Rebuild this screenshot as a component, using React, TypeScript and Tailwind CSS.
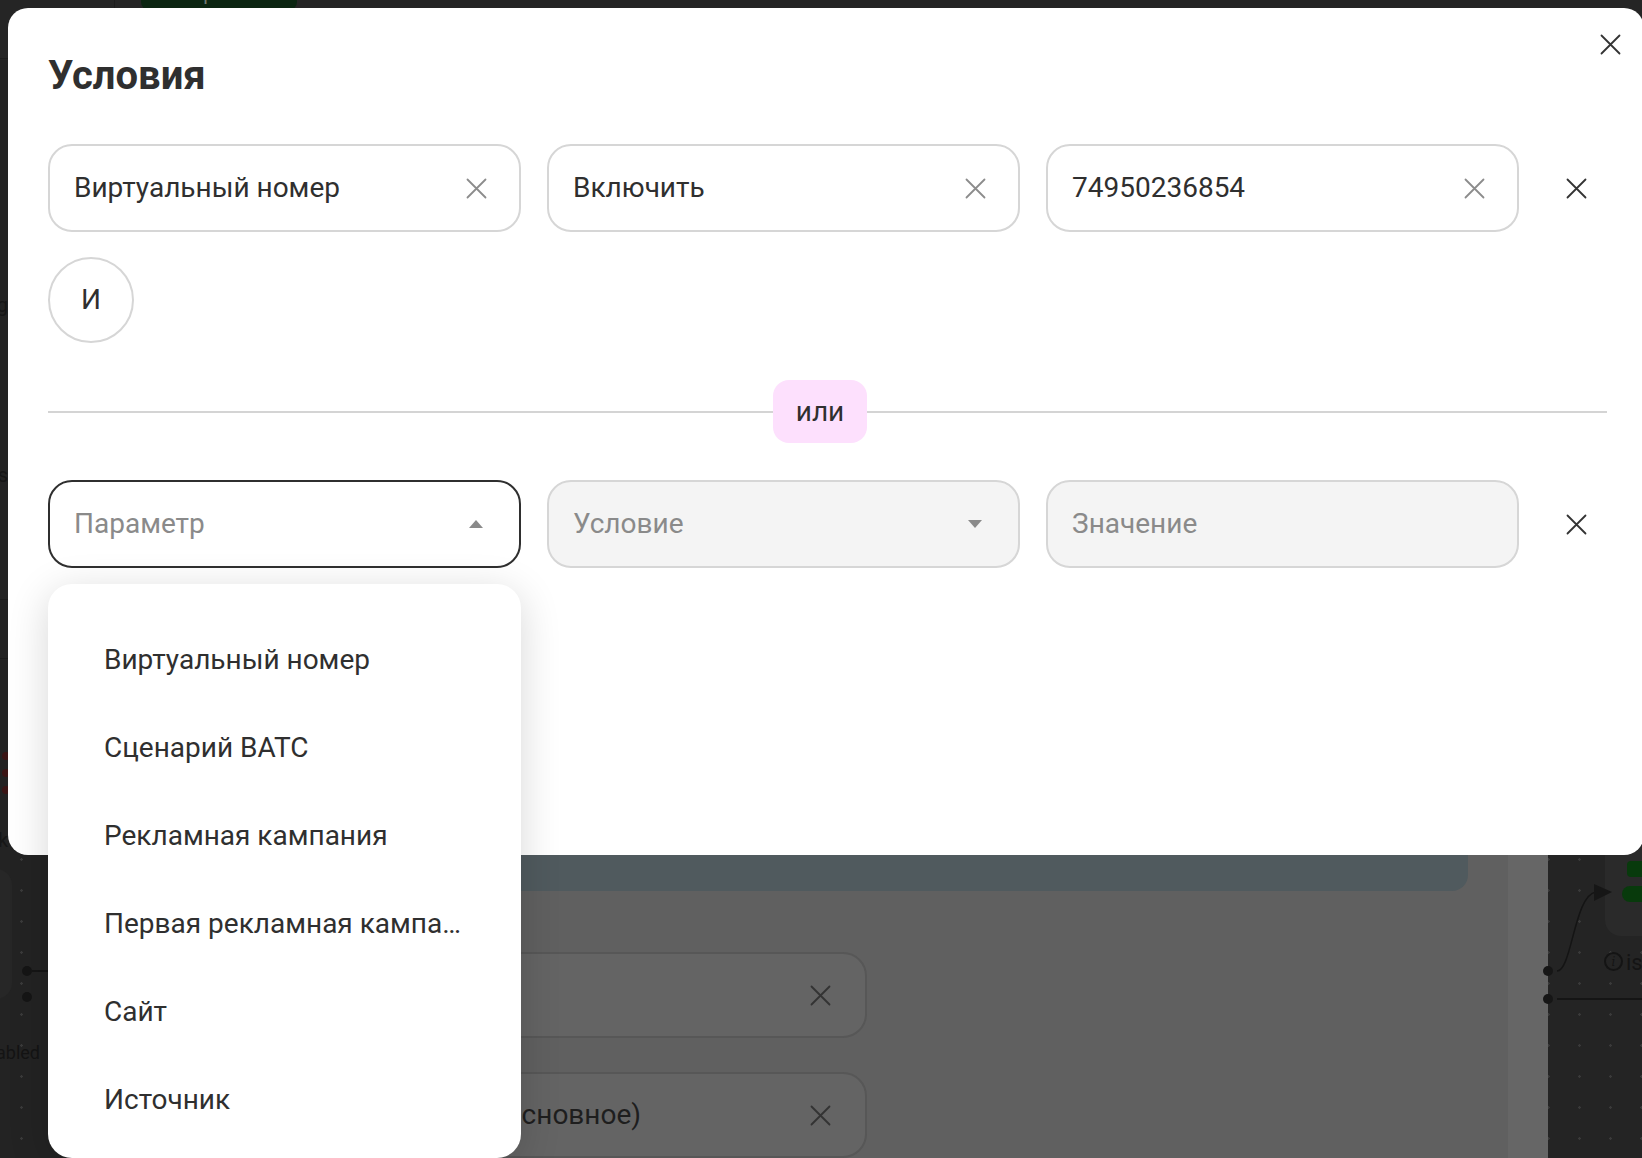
import React from 'react';

const Cross = ({ className }: { className?: string }) => (
  <svg viewBox="0 0 21 21" fill="none" stroke="currentColor" strokeWidth={1.8} strokeLinecap="round" className={className}>
    <path d="M1.5 1.5L19.5 19.5M19.5 1.5L1.5 19.5" />
  </svg>
);

const Caret = ({ up }: { up?: boolean }) => (
  <svg viewBox="0 0 14 8" className="w-[14px] h-[8px] text-[#8a8a8a]" fill="currentColor">
    {up ? <polygon points="0,8 14,8 7,0" /> : <polygon points="0,0 14,0 7,8" />}
  </svg>
);

const params = [
  'Виртуальный номер',
  'Сценарий ВАТС',
  'Рекламная кампания',
  'Первая рекламная кампания',
  'Сайт',
  'Источник',
];

function Field({ value }: { value: string }) {
  return (
    <div className="h-[88px] rounded-[24px] border-2 border-[#d6d6d6] bg-white flex items-center justify-between pl-[24px] pr-[32px]">
      <span className="text-[28px] text-[#2f2f2f]">{value}</span>
      <Cross className="w-[21px] h-[21px] text-[#8c8c8c]" />
    </div>
  );
}

function Backdrop() {
  return (
    <div className="flex flex-col w-full h-full">
      {/* top bar */}
      <div className="h-[60px] bg-[#252525] border-b border-[#1c1c1c] flex">
        <div className="w-[115px] border-r border-[#1d1d1d]" />
        <div className="ml-[26px] -mt-[30px] w-[156px] h-[40px] rounded-[8px] bg-[#0b2511] flex items-end justify-center pb-[2px] text-[20px] text-[#6f7a70]">
          Сохранить
        </div>
      </div>
      <div className="flex flex-1">
        {/* left canvas */}
        <div className="relative w-[308px] bg-[#232323] bg-[radial-gradient(circle,#3a3a3a_1px,transparent_1.5px)] bg-[length:31px_31px] bg-[position:6px_10px]">
          <div className="absolute left-0 top-0 w-[8px] h-[300px] flex flex-col items-end text-[20px] text-[#161616] leading-none">
            <div className="mt-[236px]">g</div>
            <div className="mt-[150px]">s</div>
          </div>
          <div className="absolute left-[-90px] top-[540px] w-[98px] h-[60px] border-y border-[#1b1b1b]" />
          <div className="absolute left-[2px] top-[693px] flex flex-col gap-[9px]">
            <span className="w-[8px] h-[8px] rounded-full bg-[#3b1515]" />
            <span className="w-[8px] h-[8px] rounded-full bg-[#3b1515]" />
            <span className="w-[8px] h-[8px] rounded-full bg-[#3b1515]" />
          </div>
          <div className="absolute left-[-2px] top-[766px] text-[20px] text-[#161616]">k</div>
          <div className="absolute left-[-120px] top-[810px] w-[132px] h-[130px] rounded-[16px] bg-[#272727]" />
          <span className="absolute left-[22px] top-[907px] w-[10px] h-[10px] rounded-full bg-[#151515]" />
          <span className="absolute left-[32px] top-[911px] w-[30px] h-[2px] bg-[#151515]" />
          <span className="absolute left-[22px] top-[933px] w-[10px] h-[10px] rounded-full bg-[#151515]" />
          <div className="absolute left-[-4px] top-[980px] text-[18px] text-[#141414]">abled</div>
        </div>
        {/* side panel */}
        <div className="w-[1240px] flex bg-[#606060]">
          <div className="flex-1 pl-[24px] pt-[24px] pr-[40px]">
            <div className="h-[808px] rounded-[16px] bg-[#505a5e]" />
            <div className="mt-[61px] w-[535px] h-[86px] rounded-[24px] border-2 border-[#575757] bg-[#646464] flex items-center justify-between pl-[26px] pr-[34px]">
              <span className="text-[28px] text-[#1e1e1e]">Сайт</span>
              <Cross className="w-[21px] h-[21px] text-[#333]" />
            </div>
            <div className="mt-[34px] w-[535px] h-[86px] rounded-[24px] border-2 border-[#575757] bg-[#646464] flex items-center justify-between pl-[26px] pr-[34px]">
              <span className="text-[28px] text-[#1e1e1e]">Сценарий (основное)</span>
              <Cross className="w-[21px] h-[21px] text-[#333]" />
            </div>
          </div>
          <div className="w-[40px] bg-[#666666]" />
        </div>
        {/* right canvas */}
        <div className="relative flex-1 bg-[#242424] bg-[radial-gradient(circle,#3a3a3a_1px,transparent_1.5px)] bg-[length:31px_31px] bg-[position:-15px_10px]">
          <div className="absolute left-[57px] top-[740px] w-[90px] h-[137px] rounded-[16px] bg-[#2a2a2a]" />
          <div className="absolute left-[79px] top-[802px] w-[40px] h-[16px] rounded-[4px] bg-[#083a0c]" />
          <div className="absolute left-[74px] top-[827px] w-[45px] h-[16px] rounded-l-[8px] bg-[#083a0c]" />
          <svg className="absolute left-0 top-[820px] w-[70px] h-[100px]" fill="none">
            <path d="M9 92 C 24 92, 26 16, 48 13" stroke="#141414" strokeWidth="1.5" />
            <polygon points="46,5 64,13 46,22" fill="#161616" />
          </svg>
          <div className="absolute left-[56px] top-[893px] w-[19px] h-[19px] rounded-full border-2 border-[#141414] flex items-center justify-center text-[12px] italic text-[#141414] font-['DejaVu_Serif',serif]">
            i
          </div>
          <div className="absolute left-[78px] top-[887px] text-[22px] text-[#141414]">is</div>
          <span className="absolute left-[9px] top-[939px] w-[100px] h-[2px] bg-[#151515]" />
          <span className="absolute left-[-5px] top-[907px] w-[10px] h-[10px] rounded-full bg-[#161616]" />
          <span className="absolute left-[-5px] top-[935px] w-[10px] h-[10px] rounded-full bg-[#161616]" />
        </div>
      </div>
    </div>
  );
}

export default function App() {
  return (
    <div className="relative w-[1642px] h-[1158px] overflow-hidden bg-[#232323] font-['Roboto',sans-serif]">
      <Backdrop />

      {/* Modal */}
      <div className="absolute left-[8px] top-[8px] w-[1636px] h-[847px] bg-white rounded-[20px] pl-[40px] pt-[48px]">
        <button className="absolute right-[23px] top-[26px]">
          <Cross className="w-[21px] h-[21px] text-[#333]" />
        </button>

        <h2 className="text-[40px] leading-[40px] font-bold text-[#2f2f2f]">Условия</h2>

        <div className="mt-[48px] w-[1559px] grid grid-cols-[1fr_1fr_1fr_62px] gap-x-[26px]">
          <Field value="Виртуальный номер" />
          <Field value="Включить" />
          <Field value="74950236854" />
          <div className="flex items-center justify-center">
            <Cross className="w-[21px] h-[21px] text-[#333]" />
          </div>
        </div>

        <div className="mt-[25px] w-[86px] h-[86px] rounded-full border-2 border-[#d6d6d6] flex items-center justify-center text-[28px] text-[#2f2f2f]">
          И
        </div>

        {/* or divider */}
        <div className="mt-[37px] w-[1559px] h-[63px] flex items-center">
          <div className="w-[725px] h-[2px] bg-[#d4d4d4]" />
          <div className="w-[94px] h-[63px] rounded-[16px] bg-[#fde0fd] flex items-center justify-center text-[28px] text-[#2f2f2f]">
            или
          </div>
          <div className="flex-1 h-[2px] bg-[#d4d4d4]" />
        </div>

        <div className="mt-[37px] w-[1559px] grid grid-cols-[1fr_1fr_1fr_62px] gap-x-[26px]">
          <div className="relative">
            <div className="h-[88px] rounded-[24px] border-2 border-[#2f2f2f] bg-white flex items-center justify-between pl-[24px] pr-[36px]">
              <span className="text-[28px] text-[#8a8a8a]">Параметр</span>
              <Caret up />
            </div>
            <div className="absolute z-10 left-0 top-[104px] w-full h-[574px] overflow-hidden rounded-[24px] bg-white shadow-[0_8px_40px_rgba(0,0,0,0.16)] pt-[32px]">
              {params.map((p) => (
                <div
                  key={p}
                  className="h-[88px] leading-[88px] pl-[56px] pr-[56px] text-[28px] text-[#2f2f2f] whitespace-nowrap overflow-hidden text-ellipsis"
                >
                  {p}
                </div>
              ))}
            </div>
          </div>
          <div className="h-[88px] rounded-[24px] border-2 border-[#d6d6d6] bg-[#f4f4f4] flex items-center justify-between pl-[24px] pr-[36px]">
            <span className="text-[28px] text-[#8a8a8a]">Условие</span>
            <Caret />
          </div>
          <div className="h-[88px] rounded-[24px] border-2 border-[#d6d6d6] bg-[#f4f4f4] flex items-center pl-[24px]">
            <span className="text-[28px] text-[#8a8a8a]">Значение</span>
          </div>
          <div className="flex items-center justify-center">
            <Cross className="w-[21px] h-[21px] text-[#333]" />
          </div>
        </div>
      </div>
    </div>
  );
}
